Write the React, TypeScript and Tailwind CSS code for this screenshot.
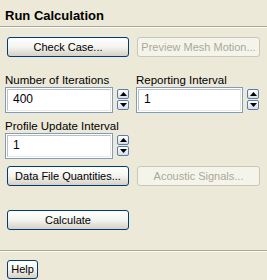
import { ReactNode } from "react";

const XpButton = ({
  children,
  disabled,
  className = "",
}: {
  children: ReactNode;
  disabled?: boolean;
  className?: string;
}) => (
  <button
    className={
      disabled
        ? `h-[20px] rounded-[3px] border border-[#C9C7BA] bg-[#F5F4EA] text-[#ACA899] text-[11px] leading-none whitespace-nowrap ${className}`
        : `h-[20px] rounded-[3px] border border-[#003C74] bg-gradient-to-b from-white via-[#F4F4F0] to-[#D6D0C5] text-black text-[11px] leading-none whitespace-nowrap ${className}`
    }
  >
    {children}
  </button>
);

const Spinner = () => (
  <div className="flex flex-col gap-[1px] mt-[2px]">
    {["up", "down"].map((dir) => (
      <div
        key={dir}
        className="w-[12px] h-[10px] rounded-[2px] border border-[#5A7EA8] bg-gradient-to-b from-white to-[#D8DCE8] flex items-center justify-center"
      >
        <svg width="7" height="4" viewBox="0 0 7 4">
          {dir === "up" ? (
            <polygon points="3.5,0 7,4 0,4" fill="#000" />
          ) : (
            <polygon points="0,0 7,0 3.5,4" fill="#000" />
          )}
        </svg>
      </div>
    ))}
  </div>
);

const NumberField = ({
  label,
  value,
  width,
}: {
  label: string;
  value: string;
  width: string;
}) => (
  <div className="flex flex-col">
    <span className="text-[11.5px] leading-[13px] h-[13px] whitespace-nowrap">{label}</span>
    <div className="flex gap-[4px]">
      <div className={`${width} h-[26px] border border-[#7F9DB9] bg-white p-[1px]`}>
        <div className="w-full h-full border border-[#C0C0C0] border-r-[#E8E8E8] border-b-[#E8E8E8] pl-[5px] pt-[3px] text-[12px] leading-none">
          {value}
        </div>
      </div>
      <Spinner />
    </div>
  </div>
);

export default function App() {
  return (
    <div className="w-[267px] h-[280px] bg-[#ECE9D8] flex flex-col font-['Liberation_Sans',Arial,sans-serif] text-black overflow-hidden">
      <div className="h-[27px] px-[5px] pt-[9px] text-[13px] font-bold leading-none border-b border-[#ACA899]">
        Run Calculation
      </div>
      <div className="h-px bg-white" />

      <div className="flex gap-[8px] px-[7px] mt-[9px]">
        <XpButton className="w-[122px]">Check Case...</XpButton>
        <XpButton disabled className="w-[123px]">
          Preview Mesh Motion...
        </XpButton>
      </div>

      <div className="flex gap-[7px] pl-[5px] mt-[17px]">
        <NumberField label="Number of Iterations" value="400" width="w-[108px]" />
        <NumberField label="Reporting Interval" value="1" width="w-[107px]" />
      </div>

      <div className="flex pl-[5px] mt-[7px]">
        <NumberField label="Profile Update Interval" value="1" width="w-[108px]" />
      </div>

      <div className="flex gap-[8px] px-[7px] mt-[7px]">
        <XpButton className="w-[122px]">Data File Quantities...</XpButton>
        <XpButton disabled className="w-[123px]">
          Acoustic Signals...
        </XpButton>
      </div>

      <div className="flex px-[7px] mt-[24px]">
        <XpButton className="w-[122px]">Calculate</XpButton>
      </div>

      <div className="mt-[20px] border-b border-[#ACA899]" />
      <div className="h-px bg-white" />

      <div className="flex px-[7px] mt-[8px]">
        <XpButton className="w-[31px] !h-[19px]">Help</XpButton>
      </div>
    </div>
  );
}
